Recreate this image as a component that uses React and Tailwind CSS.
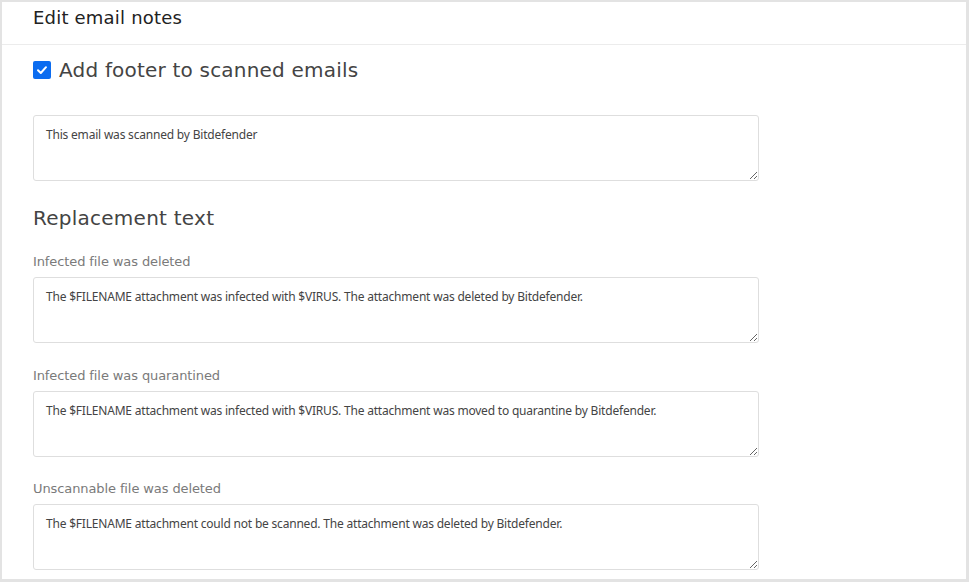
import React from "react";

const heading = { fontFamily: '"DejaVu Sans", "Open Sans", sans-serif' };

function Field({ value, className = "" }) {
  return (
    <textarea
      defaultValue={value}
      className={`block w-[726px] h-[66px] border border-[#dedede] rounded-[3px] px-[12px] pt-[10px] pb-[6px] text-[12px] leading-[18px] tracking-[-0.2px] text-[#444] bg-white outline-none ${className}`}
      style={{ fontFamily: '"Noto Sans", Roboto, sans-serif' }}
    />
  );
}

export default function App() {
  return (
    <div className="w-[969px] h-[582px] bg-[#e3e3e3] pt-[2px] pl-[2px] pr-[3px] pb-[3px]">
      <div className="w-full h-full bg-white overflow-hidden">
        <div className="h-[43px] border-b border-[#ececec] pt-[4px] px-[31px]">
          <div className="text-[18px] leading-[24px] tracking-[0.2px] text-[#222]" style={heading}>
            Edit email notes
          </div>
        </div>
        <div className="px-[31px]">
          <label className="mt-[11px] flex items-center gap-[8px] h-[28px]">
            <span className="w-[18px] h-[18px] rounded-[2px] bg-[#0b6cf0] flex items-center justify-center">
              <svg width="12" height="12" viewBox="0 0 12 12" fill="none">
                <path d="M2 6.3 L4.8 9 L10 3.2" stroke="white" strokeWidth="2" strokeLinecap="round" strokeLinejoin="round" />
              </svg>
            </span>
            <span className="text-[20px] leading-[28px] tracking-[0.2px] text-[#444]" style={heading}>
              Add footer to scanned emails
            </span>
          </label>
          <Field className="mt-[31px]" value="This email was scanned by Bitdefender" />
          <div className="mt-[23px] text-[20px] leading-[28px] tracking-[0.25px] text-[#444]" style={heading}>
            Replacement text
          </div>
          <div className="mt-[20px] text-[13px] leading-[20px] tracking-[-0.1px] text-[#7a7a7a]" style={heading}>
            Infected file was deleted
          </div>
          <Field
            className="mt-[5px]"
            value="The $FILENAME attachment was infected with $VIRUS. The attachment was deleted by Bitdefender."
          />
          <div className="mt-[23px] text-[13px] leading-[20px] tracking-[-0.1px] text-[#7a7a7a]" style={heading}>
            Infected file was quarantined
          </div>
          <Field
            className="mt-[5px]"
            value="The $FILENAME attachment was infected with $VIRUS. The attachment was moved to quarantine by Bitdefender."
          />
          <div className="mt-[22px] text-[13px] leading-[20px] tracking-[-0.1px] text-[#7a7a7a]" style={heading}>
            Unscannable file was deleted
          </div>
          <Field
            className="mt-[5px]"
            value="The $FILENAME attachment could not be scanned. The attachment was deleted by Bitdefender."
          />
        </div>
      </div>
    </div>
  );
}
